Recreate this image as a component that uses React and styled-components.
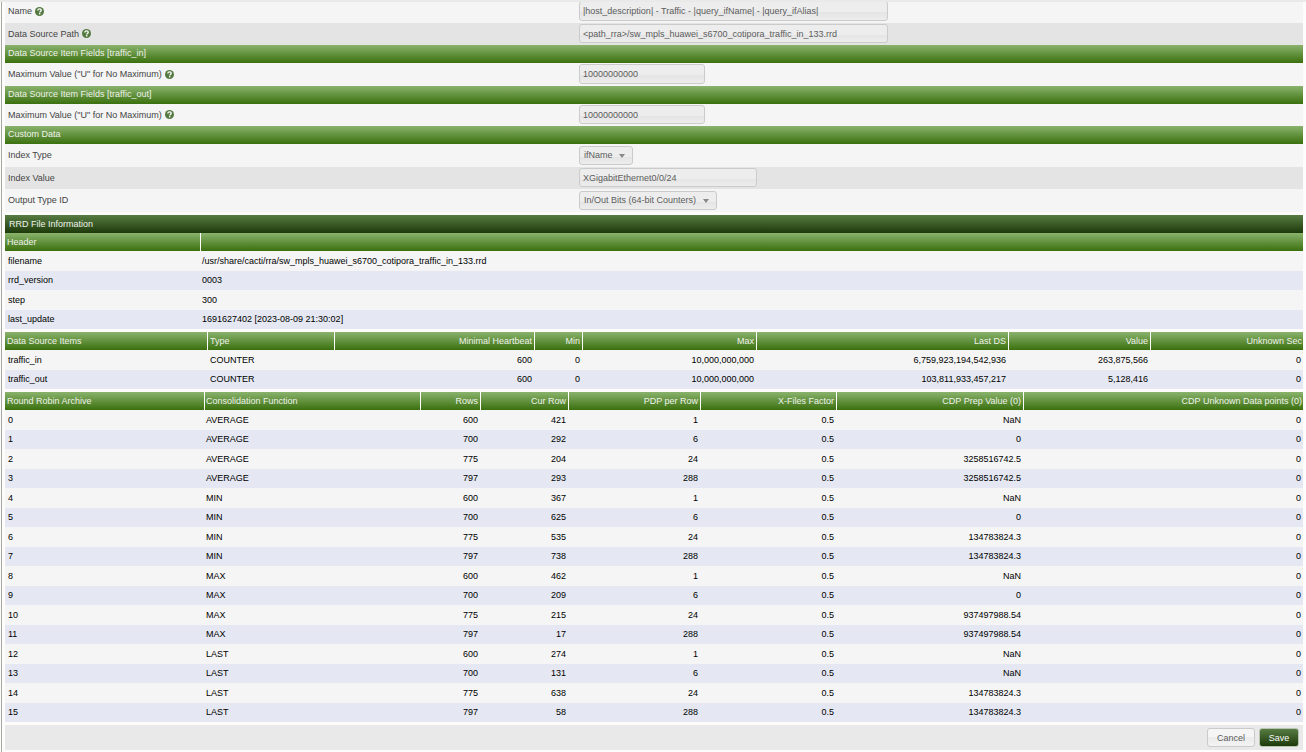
import React from "react";
import styled, { createGlobalStyle, css } from "styled-components";

const headerColumns = [
  { label: "Header", width: 196, left: true },
  { label: "", width: 1102, left: true },
];

const headerItems = [
  ["filename", "/usr/share/cacti/rra/sw_mpls_huawei_s6700_cotipora_traffic_in_133.rrd"],
  ["rrd_version", "0003"],
  ["step", "300"],
  ["last_update", "1691627402 [2023-08-09 21:30:02]"],
];

const dataSourceColumns = [
  { label: "Data Source Items", width: 203, left: true },
  { label: "Type", width: 127, left: true },
  { label: "Minimal Heartbeat", width: 200 },
  { label: "Min", width: 48 },
  { label: "Max", width: 174 },
  { label: "Last DS", width: 252 },
  { label: "Value", width: 142 },
  { label: "Unknown Sec", width: 152 },
];

const dataSourceItems = [
  ["traffic_in", "COUNTER", "600", "0", "10,000,000,000", "6,759,923,194,542,936", "263,875,566", "0"],
  ["traffic_out", "COUNTER", "600", "0", "10,000,000,000", "103,811,933,457,217", "5,128,416", "0"],
];

const archiveColumns = [
  { label: "Round Robin Archive", width: 200, left: true },
  { label: "Consolidation Function", width: 216, left: true },
  { label: "Rows", width: 60 },
  { label: "Cur Row", width: 88 },
  { label: "PDP per Row", width: 132 },
  { label: "X-Files Factor", width: 136 },
  { label: "CDP Prep Value (0)", width: 187 },
  { label: "CDP Unknown Data points (0)", width: 279 },
];

// rows and pdp repeat for every consolidation function
const archiveSteps = [
  ["600", "1"],
  ["700", "6"],
  ["775", "24"],
  ["797", "288"],
];

const archiveGroups = [
  { fn: "AVERAGE", cur: ["421", "292", "204", "293"], prep: ["NaN", "0", "3258516742.5", "3258516742.5"] },
  { fn: "MIN", cur: ["367", "625", "535", "738"], prep: ["NaN", "0", "134783824.3", "134783824.3"] },
  { fn: "MAX", cur: ["462", "209", "215", "17"], prep: ["NaN", "0", "937497988.54", "937497988.54"] },
  { fn: "LAST", cur: ["274", "131", "638", "58"], prep: ["NaN", "NaN", "134783824.3", "134783824.3"] },
];

const archives = archiveGroups.flatMap((group, g) =>
  archiveSteps.map(([rows, pdp], i) => [
    String(g * 4 + i),
    group.fn,
    rows,
    group.cur[i],
    pdp,
    "0.5",
    group.prep[i],
    "0",
  ])
);

function HelpIcon() {
  return (
    <HelpSvg viewBox="0 0 16 16" aria-hidden="true">
      <circle cx="8" cy="8" r="8" fill="#547a41" />
      <path
        d="M5 6.2C5.1 4.300 6.300 3.300 8.100 3.300c1.800 0 3 1 3 2.500 0 2.100-2.700 2.100-2.700 3.900"
        fill="none"
        stroke="#fff"
        strokeWidth="2.400"
      />
      <rect x="7" y="10.800" width="2.600" height="2.400" fill="#fff" />
    </HelpSvg>
  );
}

function Field({ id, label, help, alt, short, children }) {
  return (
    <FormRow $alt={alt} $short={short}>
      <FieldLabel htmlFor={id}>
        {label}
        {help && <HelpIcon />}
      </FieldLabel>
      <FieldValue>{children}</FieldValue>
    </FormRow>
  );
}

function Select({ id, option }) {
  return (
    <SelectWrap>
      <SelectBox id={id} defaultValue={option}>
        <option>{option}</option>
      </SelectBox>
      <Caret viewBox="0 0 6 4" aria-hidden="true">
        <path d="M0 0h6L3 4z" fill="#888" />
      </Caret>
    </SelectWrap>
  );
}

function DataTable({ columns, rows, tight }) {
  return (
    <Table>
      <colgroup>
        {columns.map((col, i) => (
          <Col key={i} $width={col.width} />
        ))}
      </colgroup>
      <thead>
        <tr>
          {columns.map((col, i) => (
            <Th key={i} $left={col.left} $tight={tight}>
              {col.label}
            </Th>
          ))}
        </tr>
      </thead>
      <tbody>
        {rows.map((row) => (
          <Tr key={row[0]}>
            {row.map((cell, i) => (
              <Td key={i} $left={columns[i].left} $tight={tight}>
                {cell}
              </Td>
            ))}
          </Tr>
        ))}
      </tbody>
    </Table>
  );
}

function App() {
  return (
    <>
      <GlobalStyle />
      <Page>
        <Content onSubmit={(e) => e.preventDefault()}>
          <section>
            <Field id="name" label="Name" help>
              <TextInput
                id="name"
                $width={309}
                defaultValue="|host_description| - Traffic - |query_ifName| - |query_ifAlias|"
              />
            </Field>
            <Field id="path" label="Data Source Path" help alt short>
              <TextInput
                id="path"
                $width={309}
                defaultValue="<path_rra>/sw_mpls_huawei_s6700_cotipora_traffic_in_133.rrd"
              />
            </Field>
            <SectionBar>Data Source Item Fields [traffic_in]</SectionBar>
            <Field id="max_in" label={'Maximum Value ("U" for No Maximum)'} help>
              <TextInput id="max_in" $width={126} defaultValue="10000000000" />
            </Field>
            <SectionBar>Data Source Item Fields [traffic_out]</SectionBar>
            <Field id="max_out" label={'Maximum Value ("U" for No Maximum)'} help short>
              <TextInput id="max_out" $width={126} defaultValue="10000000000" />
            </Field>
            <SectionBar>Custom Data</SectionBar>
            <Field id="index_type" label="Index Type">
              <Select id="index_type" option="ifName" />
            </Field>
            <Field id="index_value" label="Index Value" alt short>
              <TextInput id="index_value" $width={178} defaultValue="XGigabitEthernet0/0/24" />
            </Field>
            <Field id="output_type" label="Output Type ID">
              <Select id="output_type" option="In/Out Bits (64-bit Counters)" />
            </Field>
          </section>

          <section>
            <TitleBar>RRD File Information</TitleBar>
            <DataTable columns={headerColumns} rows={headerItems} tight />
          </section>

          <DataTable columns={dataSourceColumns} rows={dataSourceItems} />
          <DataTable columns={archiveColumns} rows={archives} tight />

          <Actions>
            <Button type="button" $width={48}>
              Cancel
            </Button>
            <Button type="submit" $width={40} $primary>
              Save
            </Button>
          </Actions>
        </Content>
      </Page>
    </>
  );
}

export default App;

const GlobalStyle = createGlobalStyle`
  * {
    box-sizing: border-box;
  }

  body {
    margin: 0;
    background: #fefbfb;
    font-family: "Liberation Sans", Arial, sans-serif;
    font-size: 9px;
    line-height: 12px;
    color: #000;
  }

  input, select, button {
    font: inherit;
  }
`;

const greenBar = css`
  height: 18px;
  background: linear-gradient(#8ab36d, #3a700e);
  color: #eef3ea;
`;

const control = css`
  border: 1px solid #cbcbcb;
  border-radius: 3px;
  background: linear-gradient(#ededed 58%, #e4e4e4 58%, #ededed);
  color: #5c5c5c;
`;

const Page = styled.main`
  border-top: 2px solid #e9e9e9;
  padding-left: 1px;
  overflow: hidden;
`;

// the form is scrolled slightly under the top edge
const Content = styled.form`
  display: flex;
  flex-direction: column;
  gap: 3px;
  margin-top: -2px;
  padding: 0 3px 2px;
  border-left: 1px solid #a3a8a3;
`;

const FormRow = styled.div`
  display: grid;
  grid-template-columns: 574px 1fr;
  height: ${(props) => (props.$short ? 22 : 23)}px;
  padding: 1px 0 2px;
  background: ${(props) => (props.$alt ? "#e4e4e4" : "#f5f5f5")};
`;

const FieldLabel = styled.label`
  display: flex;
  align-items: center;
  gap: 3px;
  padding-left: 3px;
  color: #444;
`;

const FieldValue = styled.div`
  display: flex;
`;

const HelpSvg = styled.svg`
  width: 9px;
  height: 9px;
`;

const TextInput = styled.input`
  ${control}
  width: ${(props) => props.$width}px;
  padding: 0 3px;
`;

const SelectWrap = styled.div`
  position: relative;
  align-self: flex-end;
`;

const SelectBox = styled.select`
  ${control}
  display: block;
  height: 19px;
  appearance: none;
  padding: 0 19px 1px 4px;
`;

const Caret = styled.svg`
  position: absolute;
  top: 8px;
  right: 8px;
  width: 6px;
  height: 4px;
  pointer-events: none;
`;

const SectionBar = styled.div`
  ${greenBar}
  padding: 2px 3px;
`;

const TitleBar = styled.div`
  height: 18px;
  padding: 3px 4px;
  background: linear-gradient(#587c43, #1d390a);
  color: #eef3ea;
`;

const Table = styled.table`
  width: 100%;
  table-layout: fixed;
  border-collapse: separate;
  border-spacing: 0;
`;

const Col = styled.col`
  width: ${(props) => props.$width}px;
`;

const Th = styled.th`
  ${greenBar}
  padding: 0 2px 0 ${(props) => (props.$tight ? 1 : 2)}px;
  border-right: 1px solid #fff;
  font-weight: normal;
  text-align: ${(props) => (props.$left ? "left" : "right")};
  white-space: nowrap;

  &:first-child {
    padding-left: 2px;
  }

  &:last-child {
    padding-right: 1px;
    border-right: 0;
  }
`;

const Td = styled.td`
  padding: 0 3px 0 ${(props) => (props.$tight ? 1 : 2)}px;
  text-align: ${(props) => (props.$left ? "left" : "right")};

  &:first-child {
    padding-left: 3px;
  }

  &:last-child {
    padding-right: 2px;
  }
`;

const Tr = styled.tr`
  height: 20px;
  background: #f5f5f5;

  &:nth-child(even) {
    height: 19px;
    background: #e5e8f2;
  }

  &:nth-child(even) ${Td} {
    padding-bottom: 1px;
  }
`;

const Actions = styled.div`
  display: flex;
  justify-content: flex-end;
  align-items: center;
  gap: 4px;
  height: 25px;
  padding-right: 4px;
  background: #e9e9e9;
`;

const Button = styled.button`
  width: ${(props) => props.$width}px;
  height: 19px;
  padding: 0;
  border: 1px solid #cbcbcb;
  border-radius: 3px;
  background: linear-gradient(#f5f5f5 50%, #ececec 50%, #f3f3f3);
  color: #5c5c5c;
  cursor: pointer;

  ${(props) =>
    props.$primary &&
    css`
      border-color: #b9c4b2;
      background: linear-gradient(#587c43, #1d390a);
      color: #fff;
    `}
`;
